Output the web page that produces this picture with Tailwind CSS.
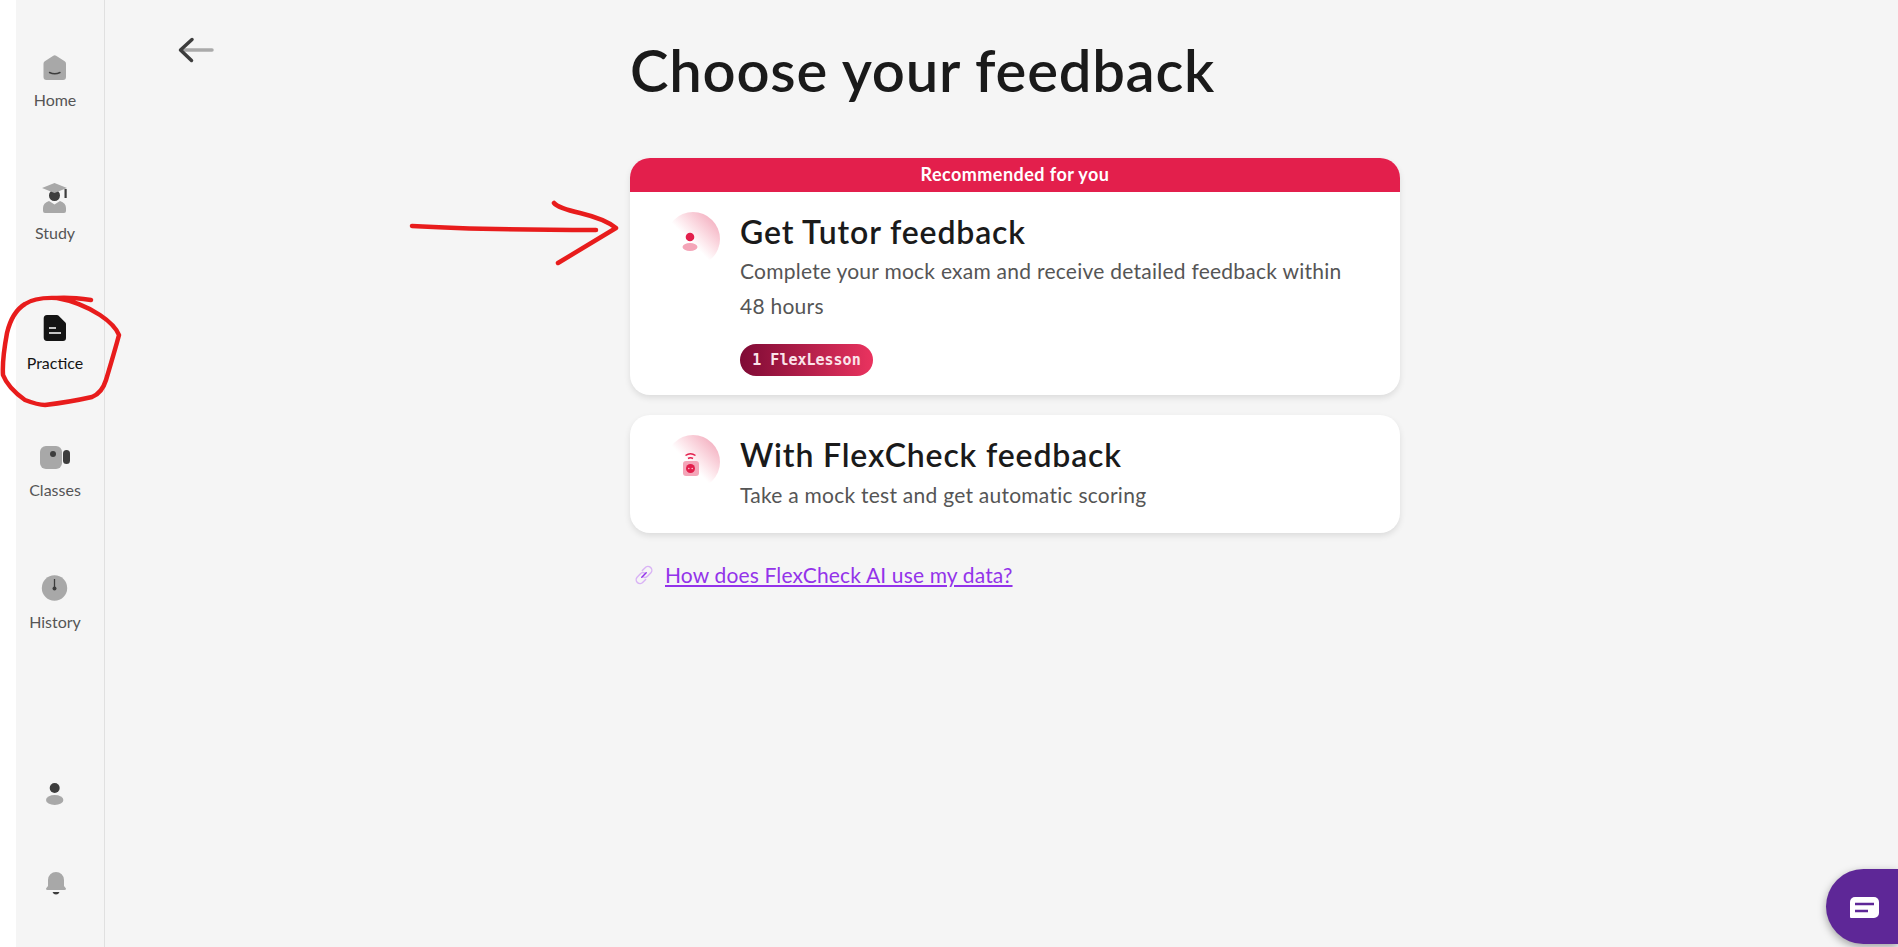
<!DOCTYPE html>
<html lang="en">
<head>
    <meta charset="UTF-8">
    <title>Choose your feedback</title>
    <script src="https://cdn.jsdelivr.net/npm/@tailwindcss/browser@4"></script>
</head>
<body class="bg-white font-['Lato',sans-serif] overflow-hidden">
    <div class="relative flex h-[947px] w-[1898px] pl-4">
        <!-- Sidebar -->
        <aside class="flex h-full w-[89px] shrink-0 flex-col border-r border-[#e0e0e0] bg-[#f5f5f5] pt-[52px] text-base leading-5 text-[#555]">
            <a class="flex h-[130px] w-[78px] flex-col items-center">
                <svg class="size-8" viewBox="0 0 32 32"><path fill="#a8a8a8" d="M14.300 3.700a2.500 2.500 0 0 1 2.800 0l8.600 5.600a3 3 0 0 1 1.300 2.500V25a3 3 0 0 1-3 3H7.500a3 3 0 0 1-3-3V11.800a3 3 0 0 1 1.300-2.500z"/><path fill="none" stroke="#3d3d3d" stroke-width="1.400" stroke-linecap="round" d="M10.500 20.500q5.200 2.500 10.500 0"/></svg>
                <span class="mt-[6px]">Home</span>
            </a>
            <a class="flex h-[130px] w-[78px] flex-col items-center">
                <svg class="size-8" viewBox="0 0 32 32"><path fill="#a8a8a8" d="M6 31a2 2 0 0 1-2-2v-3q0-5 6-7l5.500 3.500L21 19q6 2 6 7v3a2 2 0 0 1-2 2z"/><circle cx="15.500" cy="13.500" r="5.500" fill="#3d3d3d"/><path fill="#a8a8a8" d="M3 6l12.500-5L28 6l-12.500 5z"/><rect x="25.500" y="7" width="2.200" height="9" fill="#3d3d3d"/></svg>
                <span class="mt-[9px]">Study</span>
            </a>
            <a class="flex h-[130px] w-[78px] flex-col items-center text-[#141414]">
                <svg class="size-8" viewBox="0 0 32 32"><path fill="#141414" d="M8 3h10a2 2 0 0 1 1.400.6l7 7a2 2 0 0 1 .6 1.400v14a3 3 0 0 1-3 3H8a3.500 3.500 0 0 1-3.300-3.500V6.500A3.500 3.500 0 0 1 8 3z"/><path stroke="#fff" stroke-width="1.500" d="M10 16h7M10 21h12"/></svg>
                <span class="mt-[9px]">Practice</span>
            </a>
            <a class="flex h-[130px] w-[78px] flex-col items-center">
                <svg class="size-8" viewBox="0 0 32 32"><rect x="1" y="4" width="22" height="23" rx="6" fill="#a8a8a8"/><rect x="24" y="8" width="7" height="14" rx="3.500" fill="#3d3d3d"/><circle cx="14" cy="12" r="3" fill="#3d3d3d"/></svg>
                <span class="mt-[6px]">Classes</span>
            </a>
            <a class="flex h-[130px] w-[78px] flex-col items-center">
                <svg class="size-8" viewBox="0 0 32 32"><circle cx="15.500" cy="16" r="12.700" fill="#a8a8a8"/><path stroke="#3d3d3d" stroke-width="1.300" d="M15.500 7v9"/><circle cx="15.500" cy="16.500" r="2" fill="#3d3d3d"/></svg>
                <span class="mt-[8px]">History</span>
            </a>
            <a class="mt-[79px] flex w-[78px] justify-center">
                <svg class="size-8" viewBox="0 0 32 32"><circle cx="15.700" cy="7" r="5" fill="#3d3d3d"/><ellipse cx="15.700" cy="19" rx="8.700" ry="5" fill="#a8a8a8"/></svg>
            </a>
            <a class="mt-[56px] flex w-[78px] justify-center">
                <svg class="size-8" viewBox="0 0 32 32"><path fill="#a8a8a8" d="M17 3a8 8 0 0 1 8 8v6l2 2.500q0 1.500-1.500 1.500h-17Q7 21 7 19.500L9 17v-6a8 8 0 0 1 8-8z"/><path fill="#3d3d3d" d="M13.500 23h7q-1 2.500-3.500 2.500T13.500 23z"/></svg>
            </a>
        </aside>

        <!-- Main -->
        <main class="flex flex-1 bg-[#f5f5f5] pl-[73px]">
            <a class="mt-[36px] h-7 w-9 shrink-0">
                <svg class="h-7 w-9" viewBox="0 0 36 28"><path stroke="#aaa" stroke-width="3.500" stroke-linecap="round" d="M5 14h29"/><path fill="none" stroke="#3d3d3d" stroke-width="3.500" stroke-linecap="round" stroke-linejoin="round" d="M14 3.500 2.500 14l11 10.500"/></svg>
            </a>
            <div class="ml-[416px] w-[770px] pt-[36px]">
                <h1 class="text-[58px] font-semibold leading-[68px] tracking-[.75px] text-[#1a1a1a]">Choose your feedback</h1>

                <div class="mt-[54px] overflow-hidden rounded-[20px] bg-white shadow-[0_3px_6px_rgba(0,0,0,0.1)]">
                    <div class="flex h-[34px] items-center justify-center bg-[#e31f4c] pb-[2px] text-lg font-bold tracking-[.45px] text-white">Recommended for you</div>
                    <div class="flex h-[203px] pl-[36px] pt-[20px]">
                        <div class="size-[54px] shrink-0 rounded-full bg-linear-to-bl from-[#ee9db2] to-white to-55%">
                            <svg class="size-[54px]" viewBox="0 0 54 54"><circle cx="24" cy="25" r="4.300" fill="#e31f4c"/><ellipse cx="24" cy="35" rx="7.500" ry="4" fill="#f4a5b8"/></svg>
                        </div>
                        <div class="ml-[20px]">
                            <h2 class="mt-[1px] text-[32px] font-semibold leading-[38px] tracking-[.85px] text-[#1a1a1a]">Get Tutor feedback</h2>
                            <p class="mt-[2px] w-[610px] text-[21px] leading-[35px] tracking-[.25px] text-[#555]">Complete your mock exam and receive detailed feedback within 48 hours</p>
                            <span class="mt-[21px] inline-flex h-8 w-[133px] items-center justify-center rounded-full bg-linear-to-r from-[#7f0a35] to-[#ea335f] font-['DejaVu_Sans_Mono',monospace] text-[15px] font-bold text-[#fbe4ea]">1 FlexLesson</span>
                        </div>
                    </div>
                </div>

                <div class="mt-[20px] flex h-[118px] rounded-[20px] bg-white pl-[36px] pt-[20px] shadow-[0_3px_6px_rgba(0,0,0,0.1)]">
                    <div class="size-[54px] shrink-0 rounded-full bg-linear-to-bl from-[#ee9db2] to-white to-55%">
                        <svg class="size-[54px]" viewBox="0 0 54 54"><rect x="17" y="26" width="16" height="15" rx="3" fill="#f4a5b8"/><circle cx="24.500" cy="33.500" r="4.500" fill="#e31f4c"/><circle cx="22.800" cy="33.500" r=".8" fill="#f9c6d2"/><circle cx="26.200" cy="33.500" r=".8" fill="#f9c6d2"/><path fill="none" stroke="#e31f4c" stroke-width="1.500" d="M19.500 20.500q5-3.500 10 0M22 23.500q2.500-1.500 5 0"/></svg>
                    </div>
                    <div class="ml-[20px]">
                        <h2 class="mt-[1px] text-[32px] font-semibold leading-[38px] tracking-[.85px] text-[#1a1a1a]">With FlexCheck feedback</h2>
                        <p class="mt-[3px] text-[21px] leading-[35px] tracking-[.25px] text-[#555]">Take a mock test and get automatic scoring</p>
                    </div>
                </div>

                <div class="mt-[30px] flex items-center pl-[4px]">
                    <svg class="size-5" viewBox="0 0 18 18" fill="none" stroke="#d9b3f5" stroke-width="1.300" stroke-linecap="round"><path d="M7.500 5 10 2.500a3.400 3.400 0 0 1 5.200 4.500l-2.800 3a3.400 3.400 0 0 1-4.500.4"/><path d="M10.500 13 8 15.500a3.400 3.400 0 0 1-5.200-4.500l2.800-3a3.400 3.400 0 0 1 4.500-.4"/><path stroke="#9333ea" d="m7 11 4-4"/></svg>
                    <a class="ml-[11px] text-[21px] leading-6 tracking-[.15px] text-[#9333ea] underline">How does FlexCheck AI use my data?</a>
                </div>
            </div>
        </main>

        <!-- Chat button -->
        <button class="absolute left-[1826px] top-[869px] flex h-[75px] w-[72px] items-center justify-center rounded-l-full rounded-br-[40px] rounded-tr-[6px] bg-[#5e2797] pl-[5px] pt-[2px] shadow-[0_3px_8px_rgba(0,0,0,0.35)]">
            <svg class="h-[21px] w-[29px]" viewBox="0 0 29 21"><path fill="#fff" d="M5 0h19a5 5 0 0 1 5 5v11a5 5 0 0 1-5 5H1a1 1 0 0 1-1-1V5a5 5 0 0 1 5-5z"/><path stroke="#5e2797" stroke-width="2.500" d="M5 7h19M5 14h13"/></svg>
        </button>

        <!-- Red annotations drawn over the screenshot -->
        <svg class="pointer-events-none absolute left-0 top-0 h-[947px] w-[1898px]" viewBox="0 0 1898 947" fill="none" stroke="#e81c1c" stroke-width="4.500" stroke-linecap="round" stroke-linejoin="round">
            <path d="M412 226Q480 230 596 230"/>
            <path d="M554 203Q558 208 580 213Q605 219 616 228L558 263"/>
            <path d="M91 300Q70 297 57 298Q35 297 25 304Q12 312 7 333Q2 360 3 375Q8 388 25 400Q38 405 45 405Q70 402 92 397Q102 393 106 380Q115 350 119 335Q115 325 100 315Q80 302 57 298"/>
        </svg>
    </div>
</body>
</html>
